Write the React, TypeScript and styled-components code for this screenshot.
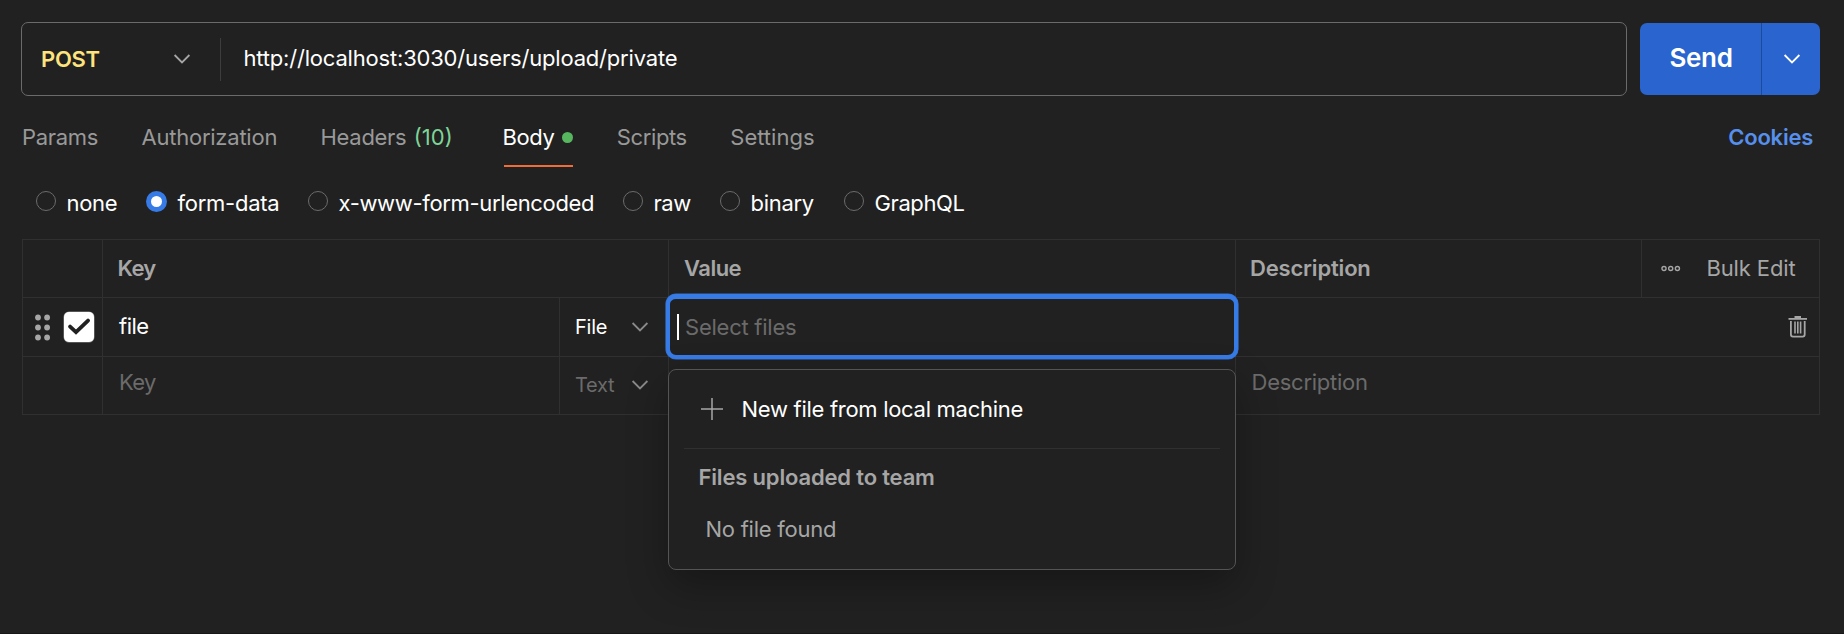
import React from "react";
import styled, { createGlobalStyle, css } from "styled-components";

const color = {
  bg: "#212121",
  line: "#303030",
  outline: "#6b6b6b",
  text: "#ffffff",
  muted: "#a6a6a6",
  tab: "#999999",
  faint: "#6b6b6b",
  blue: "#2a64ce",
  focus: "#377be6",
  link: "#5690ec",
  post: "#ffe47e",
  green: "#7fd497",
  dot: "#57b75f",
  orange: "#f26b3a",
};

const GlobalStyle = createGlobalStyle`
  *, *::before, *::after { box-sizing: border-box; }
  body {
    margin: 0;
    background: ${color.bg};
    color: ${color.text};
    font-family: Inter, sans-serif;
    font-size: 22px;
    line-height: 28px;
  }
`;

const Page = styled.main`
  display: flex;
  flex-direction: column;
  height: 634px;
  padding-top: 22px;
  border-bottom: 1px solid #1a1516;
  overflow: hidden;
`;

const Label = styled.span<{ $track?: number; $tone?: string; $bold?: boolean; $size?: number }>`
  white-space: nowrap;
  font-size: ${(p) => p.$size ?? 22}px;
  font-weight: ${(p) => (p.$bold ? 600 : 400)};
  letter-spacing: ${(p) => p.$track ?? -0.28}px;
  color: ${(p) => p.$tone ?? color.text};
`;

/* Request bar */
const RequestBar = styled.div`
  display: flex;
  gap: 13px;
  height: 74px;
  padding: 0 24px 0 21px;
`;

const UrlBox = styled.div`
  display: flex;
  align-items: center;
  flex: 1;
  border: 1px solid ${color.outline};
  border-radius: 7px;
`;

const MethodSelect = styled.div`
  display: flex;
  align-items: center;
  justify-content: space-between;
  width: 199px;
  height: 43px;
  padding: 0 29.5px 0 19px;
  border-right: 1px solid #3d3d3d;
`;

const UrlInput = styled.div`
  padding: 0 0 3px 22.5px;
`;

const SendGroup = styled.div`
  display: flex;
  width: 180px;
  height: 72px;
  margin-top: 1px;
  border-radius: 7px;
  background: ${color.blue};
`;

const SendButton = styled.div`
  display: flex;
  align-items: center;
  justify-content: center;
  width: 122px;
  padding: 0 0 3px 1px;
  border-right: 1px solid #1e4a9c;
`;

const SendMenu = styled.div`
  display: flex;
  flex: 1;
  align-items: center;
  justify-content: center;
  padding: 0 0 1px 1px;
`;

/* Request tabs */
const TabBar = styled.nav`
  display: flex;
  gap: 43.4px;
  height: 72px;
  padding: 27px 31px 0 22px;
`;

const Tab = styled.div<{ $active?: boolean }>`
  position: relative;
  display: flex;
  height: 45px;
  ${(p) =>
    p.$active &&
    css`
      &::after {
        content: "";
        position: absolute;
        left: 1px;
        right: 0;
        bottom: 1px;
        height: 2px;
        background: ${color.orange};
      }
    `}
`;

const Count = styled.span`
  margin: 0 6.5px 0 7.4px;
  color: ${color.green};
`;

const ChangedDot = styled.i`
  width: 11px;
  height: 11px;
  margin: 9px 0 0 8px;
  border-radius: 50%;
  background: ${color.dot};
`;

const CookiesLink = styled.a`
  margin-left: auto;
  color: ${color.link};
`;

/* Body type radios */
const BodyTypes = styled.div`
  display: flex;
  align-items: flex-start;
  height: 71px;
  padding: 21px 0 0 36px;
`;

const Option = styled.label<{ $width: number }>`
  display: flex;
  width: ${(p) => p.$width}px;
  gap: 10.5px;
`;

const Radio = styled.i<{ $on?: boolean }>`
  flex: none;
  width: ${(p) => (p.$on ? 21 : 20)}px;
  height: ${(p) => (p.$on ? 21 : 20)}px;
  margin-top: 2px;
  border: ${(p) => (p.$on ? `5px solid ${color.focus}` : `1px solid ${color.outline}`)};
  border-radius: 50%;
  background: ${(p) => (p.$on ? "#fff" : "transparent")};
`;

/* Form-data table */
const Table = styled.div`
  width: 1798px;
  margin-left: 22px;
  border: 1px solid ${color.line};
  border-top: 0;
`;

const Row = styled.div<{ $cols: string; $height: number }>`
  display: grid;
  grid-template-columns: ${(p) => p.$cols};
  height: ${(p) => p.$height}px;
  border-top: 1px solid ${color.line};
`;

const Cell = styled.div<{ $inset?: number; $end?: number; $lift?: number; $plain?: boolean; $spread?: boolean }>`
  position: relative;
  display: flex;
  align-items: center;
  justify-content: ${(p) => (p.$spread ? "space-between" : "flex-start")};
  padding: 0 ${(p) => p.$end ?? 0}px ${(p) => p.$lift ?? 0}px ${(p) => p.$inset ?? 15}px;
  border-left: ${(p) => (p.$plain ? 0 : 1)}px solid ${color.line};
`;

const Checkbox = styled.span`
  display: grid;
  place-items: center;
  width: 30px;
  height: 30px;
  margin-left: 13px;
  border-radius: 5px;
  background: #fff;
  box-shadow: 0 0 0 0.5px #8a8a8a;
`;

const FilePicker = styled.div`
  position: absolute;
  z-index: 2;
  top: -4px;
  left: -3px;
  display: flex;
  align-items: center;
  width: 572px;
  height: 65px;
  padding-left: 7px;
  border: 4px solid ${color.focus};
  border-top-width: 5px;
  border-radius: 10px;
  background: ${color.bg};
  box-shadow: 0 0 0 0.6px #3470d0;
`;

const Caret = styled.i`
  width: 2px;
  height: 26px;
  margin-right: 6px;
  background: #fff;
`;

const FileMenu = styled.div`
  position: absolute;
  z-index: 3;
  top: 71px;
  left: -1px;
  width: 568px;
  height: 201px;
  padding: 0 15px;
  border: 1px solid #545454;
  border-radius: 8px;
  background: ${color.bg};
  box-shadow: 0 16px 40px rgba(0, 0, 0, 0.3);
`;

const NewFile = styled.div`
  display: flex;
  align-items: center;
  gap: 18.5px;
  height: 79px;
  padding: 0 0 0 17px;
  border-bottom: 1px solid ${color.line};
`;

const MenuHeading = styled.div`
  padding: 14px 0 0 14.5px;
`;

const MenuEmpty = styled.div`
  padding: 24px 0 0 21.5px;
`;

const Chevron = ({ stroke }: { stroke: string }) => (
  <svg width="18" height="12" viewBox="0 0 18 12" fill="none" stroke={stroke} strokeWidth="1.8">
    <path d="M1.6 2 9 9.4 16.4 2" />
  </svg>
);

const DragHandle = () => (
  <svg width="16" height="27" viewBox="0 0 16 27" fill="#a6a6a6">
    {[3, 13, 23].map((y) => (
      <g key={y}>
        <circle cx="3" cy={y + 0.5} r="2.9" />
        <circle cx="12.1" cy={y + 0.5} r="2.9" />
      </g>
    ))}
  </svg>
);

const CheckMark = () => (
  <svg width="22" height="18" viewBox="0 0 22 18" fill="none" stroke="#212121" strokeWidth="3.8">
    <path d="M2.1 8.6 8 14.2 20 2.6" strokeLinecap="round" strokeLinejoin="miter" />
  </svg>
);

const MoreDots = () => (
  <svg width="20" height="8" viewBox="0 0 20 8" fill="none" stroke="#a6a6a6" strokeWidth="1.4">
    <circle cx="3" cy="4.5" r="2.05" />
    <circle cx="9.7" cy="4.5" r="2.05" />
    <circle cx="16.4" cy="4.5" r="2.05" />
  </svg>
);

const PlusIcon = () => (
  <svg width="22" height="22" viewBox="0 0 22 22" stroke="#a6a6a6" strokeWidth="1.5">
    <path d="M11 0v22M0 11h22" />
  </svg>
);

const TrashIcon = () => (
  <svg width="20" height="22" viewBox="0 0 20 22" fill="none" stroke="#a6a6a6">
    <path d="M6.5 1h6.5" strokeWidth="2" />
    <path d="M.5 2.9h18.5" strokeWidth="1.8" />
    <path d="M2.9 5v13.6q0 2 2 2h9.8q2 0 2-2V5" strokeWidth="1.8" />
    <path d="M7 5.5V17.6M9.8 5.5V17.6M12.6 5.5V17.6" strokeWidth="1.6" />
  </svg>
);

const bodyTypes = [
  { name: "none", width: 110, track: -0.35 },
  { name: "form-data", width: 162, track: -0.25 },
  { name: "x-www-form-urlencoded", width: 315, track: -0.34 },
  { name: "raw", width: 97, track: -0.5 },
  { name: "binary", width: 124, track: -0.3 },
  { name: "GraphQL", width: 140, track: -0.4 },
];

const HEAD = "79px 566px 567px 406px 178px";
const BODY = "79px 457px 109px 567px 1fr";

export default function App() {
  return (
    <Page>
      <GlobalStyle />
      <RequestBar>
        <UrlBox>
          <MethodSelect>
            <Label $bold $tone={color.post} $track={-0.3}>POST</Label>
            <Chevron stroke={color.muted} />
          </MethodSelect>
          <UrlInput>
            <Label $track={-0.19}>http://localhost:3030/users/upload/private</Label>
          </UrlInput>
        </UrlBox>
        <SendGroup>
          <SendButton>
            <Label $bold $size={26} $track={-0.3}>Send</Label>
          </SendButton>
          <SendMenu>
            <Chevron stroke="#fff" />
          </SendMenu>
        </SendGroup>
      </RequestBar>

      <TabBar>
        <Tab><Label $tone={color.tab} $track={-0.3}>Params</Label></Tab>
        <Tab><Label $tone={color.tab} $track={-0.24}>Authorization</Label></Tab>
        <Tab>
          <Label $tone={color.tab} $track={-0.3}>Headers</Label>
          <Count>(10)</Count>
        </Tab>
        <Tab $active>
          <Label $track={-0.45}>Body</Label>
          <ChangedDot />
        </Tab>
        <Tab><Label $tone={color.tab} $track={-0.36}>Scripts</Label></Tab>
        <Tab><Label $tone={color.tab} $track={0}>Settings</Label></Tab>
        <CookiesLink><Label $bold $tone={color.link} $track={-0.25}>Cookies</Label></CookiesLink>
      </TabBar>

      <BodyTypes>
        {bodyTypes.map((t) => (
          <Option key={t.name} $width={t.width}>
            <Radio $on={t.name === "form-data"} />
            <Label $track={t.track}>{t.name}</Label>
          </Option>
        ))}
      </BodyTypes>

      <Table>
        <Row $cols={HEAD} $height={58}>
          <Cell $plain />
          <Cell $inset={14.5} $lift={2}><Label $bold $tone={color.muted} $track={-0.7}>Key</Label></Cell>
          <Cell $lift={2}><Label $bold $tone={color.muted} $track={-0.5}>Value</Label></Cell>
          <Cell $inset={14} $lift={2}><Label $bold $tone={color.muted} $track={-0.18}>Description</Label></Cell>
          <Cell $inset={19} $end={23.5} $lift={2} $spread>
            <MoreDots />
            <Label $tone={color.muted} $track={-0.13}>Bulk Edit</Label>
          </Cell>
        </Row>
        <Row $cols={BODY} $height={59}>
          <Cell $plain $inset={12}>
            <DragHandle />
            <Checkbox><CheckMark /></Checkbox>
          </Cell>
          <Cell $inset={16} $lift={2}><Label $track={-0.5}>file</Label></Cell>
          <Cell $end={19.5} $spread>
            <Label $size={20} $track={-0.25}>File</Label>
            <Chevron stroke="#8a8a8a" />
          </Cell>
          <Cell>
            <FilePicker>
              <Caret />
              <Label $tone={color.faint} $track={-0.24}>Select files</Label>
            </FilePicker>
            <FileMenu>
              <NewFile>
                <PlusIcon />
                <Label $track={-0.29}>New file from local machine</Label>
              </NewFile>
              <MenuHeading>
                <Label $bold $tone={color.muted} $track={-0.17}>Files uploaded to team</Label>
              </MenuHeading>
              <MenuEmpty>
                <Label $tone={color.muted} $track={-0.25}>No file found</Label>
              </MenuEmpty>
            </FileMenu>
          </Cell>
          <Cell $inset={552}>
            <TrashIcon />
          </Cell>
        </Row>
        <Row $cols={BODY} $height={58}>
          <Cell $plain />
          <Cell $inset={16} $lift={7}><Label $tone={color.faint} $track={-0.6}>Key</Label></Cell>
          <Cell $end={19.5} $lift={2} $spread>
            <Label $size={20} $tone={color.faint} $track={-0.3}>Text</Label>
            <Chevron stroke="#8a8a8a" />
          </Cell>
          <Cell />
          <Cell $inset={15.5} $lift={7}><Label $tone={color.faint} $track={-0.25}>Description</Label></Cell>
        </Row>
      </Table>
    </Page>
  );
}
